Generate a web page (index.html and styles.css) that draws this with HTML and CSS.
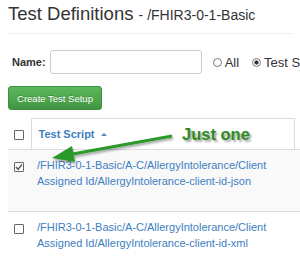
FILE: index.html
```html
<!DOCTYPE html>
<html>
    <head>
        <title>Test Definitions</title>
        <link rel="stylesheet" href="styles.css">
    </head>
    <body>
        <div class="page">
            <h1 class="title">Test Definitions <small>- /FHIR3-0-1-Basic</small></h1>

            <div class="filter">
                <label class="name-label">Name:</label>
                <input type="text" class="name-input">
                <span class="choice"><span class="radio"></span>All</span>
                <span class="choice"><span class="radio checked"></span>Test Scripts</span>
            </div>

            <button class="create">Create Test Setup</button>

            <table class="scripts">
                <colgroup>
                    <col class="col-check">
                    <col class="col-script">
                    <col class="col-more">
                </colgroup>
                <thead>
                    <tr>
                        <th class="check"><span class="box"></span></th>
                        <th class="script"><a href="#">Test Script</a><span class="caret"></span></th>
                        <th></th>
                    </tr>
                </thead>
                <tbody>
                    <tr class="odd">
                        <td class="check">
                            <span class="box">
                                <svg width="8" height="8" viewBox="0 0 8 8"><polyline points="1,4 3,6.5 7,1.5" fill="none" stroke="#555" stroke-width="1.4"/></svg>
                            </span>
                        </td>
                        <td class="script"><a href="#">/FHIR3-0-1-Basic/A-C/AllergyIntolerance/Client Assigned Id/AllergyIntolerance-client-id-json</a></td>
                        <td></td>
                    </tr>
                    <tr>
                        <td class="check"><span class="box"></span></td>
                        <td class="script"><a href="#">/FHIR3-0-1-Basic/A-C/AllergyIntolerance/Client Assigned Id/AllergyIntolerance-client-id-xml</a></td>
                        <td></td>
                    </tr>
                </tbody>
            </table>

            <!-- annotation drawn over the table -->
            <svg class="arrow" width="300" height="262" viewBox="0 0 300 262">
                <defs>
                    <filter id="shade" x="-10%" y="-50%" width="120%" height="200%">
                        <feDropShadow dx="1" dy="2" stdDeviation="1" flood-color="#000" flood-opacity="0.35"/>
                    </filter>
                </defs>
                <g filter="url(#shade)" fill="#2a992a" stroke="#2a992a">
                    <line x1="172" y1="136" x2="70" y2="154.5" stroke-width="3"/>
                    <polygon points="52,158 72,146 75,162" stroke="none"/>
                </g>
            </svg>
            <div class="callout">Just one</div>
        </div>
    </body>
</html>
```

FILE: styles.css
```css
html, body{
    margin: 0;
    overflow: hidden;
}
body{
    font-family: "Liberation Sans", Arial, sans-serif;
    color: #333;
    background-color: #fff;
}
.page{
    position: relative;
    padding: 4px 8px 0;
}
.title{
    margin: 0;
    padding-bottom: 8px;
    border-bottom: 1px solid #eee;
    font-size: 18.5px;
    line-height: 20px;
    font-weight: normal;
}
.title small{
    font-size: 14px;
}

.filter{
    display: flex;
    align-items: center;
    margin-top: 16px;
    height: 24px;
}
.name-label{
    margin: 0 4px 0 4px;
    font-size: 11px;
    font-weight: bold;
}
.name-input{
    box-sizing: border-box;
    width: 152px;
    height: 24px;
    margin: 0;
    padding: 0 6px;
    border: 1px solid #ccc;
    border-radius: 3px;
}
.choice{
    display: flex;
    align-items: center;
    gap: 3px;
    margin-left: 11px;
    font-size: 13px;
    white-space: nowrap;
}
.choice + .choice{
    margin-left: 13px;
}
.radio{
    box-sizing: border-box;
    width: 9px;
    height: 9px;
    border: 1px solid #777;
    border-radius: 50%;
    background-color: #fff;
}
.radio.checked{
    background: radial-gradient(circle, #333 0, #333 1.8px, #fff 2.4px);
}

.create{
    display: block;
    box-sizing: border-box;
    width: 94px;
    height: 24px;
    margin-top: 12px;
    padding: 0;
    border: 1px solid #3e8f3e;
    border-radius: 3px;
    background: linear-gradient(#5cb85c, #419641);
    color: #fff;
    font-family: inherit;
    font-size: 9.5px;
    text-shadow: 0 -1px 0 rgba(0,0,0,0.2);
}

.scripts{
    margin-top: 8px;
    width: 450px;
    border-collapse: collapse;
    table-layout: fixed;
    font-size: 11px;
}
.col-check{
    width: 23px;
}
.col-script{
    width: 263px;
}
.scripts a{
    color: #3d80c2;
    text-decoration: none;
}
.scripts thead tr{
    border-bottom: 1px solid #ddd;
}
.scripts th{
    height: 30px;
    padding: 0;
    text-align: left;
    vertical-align: middle;
}
.scripts th.check{
    padding-left: 6px;
}
.scripts th.script{
    padding-left: 7px;
    border: 1px solid #ddd;
    border-bottom: 0;
}
.caret{
    display: inline-block;
    margin-left: 6px;
    vertical-align: 2px;
    border-left: 3px solid transparent;
    border-right: 3px solid transparent;
    border-bottom: 3px solid #4a86c5;
}
.scripts td{
    height: 54px;
    padding: 7px 6px 0;
    vertical-align: top;
    line-height: 16px;
    border-bottom: 1px solid #ddd;
}
.scripts tr.odd td{
    background-color: #f9f9f9;
}
.box{
    display: inline-flex;
    align-items: center;
    justify-content: center;
    box-sizing: border-box;
    width: 10px;
    height: 10px;
    border: 1px solid #666;
    border-radius: 1px;
    background-color: #fff;
    vertical-align: middle;
}
td.check .box{
    display: flex;
    margin-top: 5px;
}

.arrow{
    position: absolute;
    left: 0;
    top: 0;
    pointer-events: none;
}
.callout{
    position: absolute;
    left: 182px;
    top: 124px;
    line-height: 20px;
    font-size: 16.5px;
    font-weight: bold;
    color: #2e8b22;
    text-shadow: 2px 2px 2px rgba(0,0,0,0.35);
    white-space: nowrap;
}
```
